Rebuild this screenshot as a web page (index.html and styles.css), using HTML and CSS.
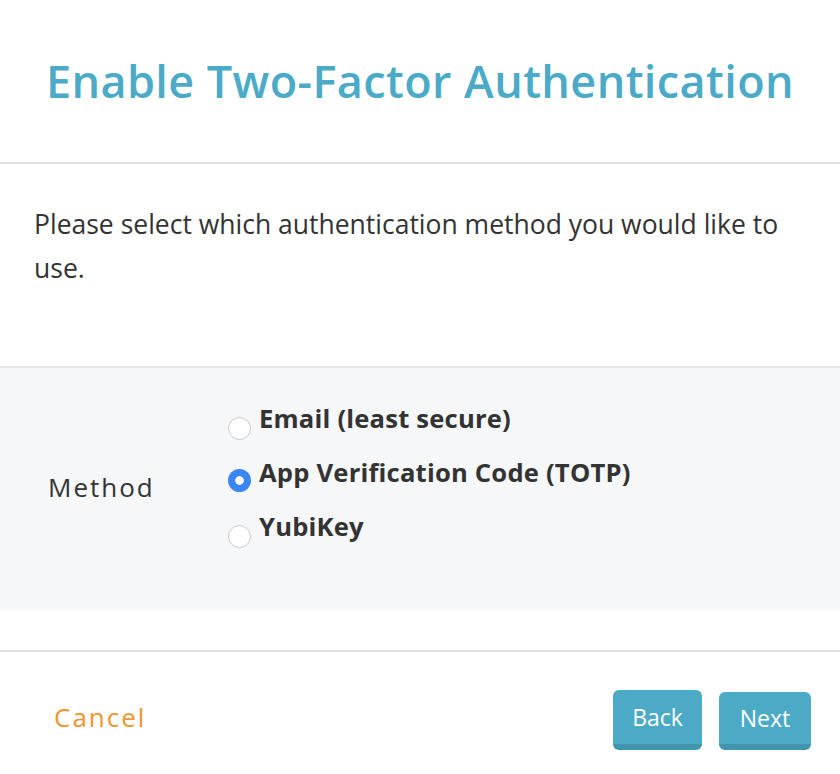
FILE: index.html
```html
<!DOCTYPE html>
<html>
<head>
<meta charset="utf-8">
<link rel="stylesheet" href="styles.css">
</head>
<body>
<div class="dialog">
  <header class="head">
    <h1 class="title">Enable Two-Factor Authentication</h1>
  </header>
  <section class="intro">
    <p>Please select which authentication method you would like to use.</p>
  </section>
  <section class="panel">
    <div class="field-label">Method</div>
    <div class="options">
      <label class="option"><span class="radio"></span><span class="opt-text">Email (least secure)</span></label>
      <label class="option"><span class="radio checked"></span><span class="opt-text">App Verification Code (TOTP)</span></label>
      <label class="option"><span class="radio"></span><span class="opt-text">YubiKey</span></label>
    </div>
  </section>
  <div class="spacer"></div>
  <footer class="foot">
    <a class="cancel">Cancel</a>
    <div class="actions">
      <button class="btn btn-back">Back</button>
      <button class="btn btn-next">Next</button>
    </div>
  </footer>
</div>
</body>
</html>
```

FILE: styles.css
```css
* { box-sizing: border-box; }
html, body { margin: 0; padding: 0; background: #fff; }
body {
  font-family: "Open Sans", "Noto Sans", sans-serif;
  color: #333;
  width: 840px;
  height: 774px;
  overflow: hidden;
}
.dialog { display: flex; flex-direction: column; }
.head {
  height: 164px;
  border-bottom: 2px solid #e2e2e2;
  display: flex;
  align-items: center;
  justify-content: center;
}
.title {
  margin: 0 0 2px 0;
  font-size: 45px;
  font-weight: 600;
  color: #4aaac7;
  letter-spacing: 0.4px;
  white-space: nowrap;
}
.intro {
  height: 204px;
  padding: 38px 34px 0 34px;
  border-bottom: 2px solid #e3e5e8;
}
.intro p {
  margin: 0;
  font-size: 26.5px;
  line-height: 44px;
  color: #333;
  width: 772px;
}
.panel {
  background: #f6f7f9;
  height: 242px;
  display: flex;
  padding: 23px 0 0 48px;
}
.field-label {
  width: 180px;
  font-size: 26px;
  letter-spacing: 2px;
  color: #333;
  padding-top: 78px;
}
.options { display: flex; flex-direction: column; }
.option {
  display: flex;
  align-items: center;
  height: 54px;
}
.radio {
  width: 23px;
  height: 23px;
  border-radius: 50%;
  border: 1px solid #c9c9c9;
  background: #fff;
  margin: 20px 8px 0 0;
  flex: none;
}
.radio.checked {
  border: none;
  background: radial-gradient(circle, #fff 0 4px, #3b86f7 4.6px);
  margin-top: 16px;
}
.opt-text {
  font-size: 25.6px;
  font-weight: 700;
  color: #333;
  letter-spacing: 0.2px;
}
.spacer { height: 42px; border-bottom: 2px solid #e2e2e2; }
.foot {
  height: 120px;
  display: flex;
  align-items: flex-start;
  justify-content: space-between;
  padding: 38px 29px 0 54px;
}
.cancel {
  font-size: 26px;
  color: #f0952f;
  letter-spacing: 2px;
  margin-top: 9px;
}
.actions { display: flex; gap: 17px; align-items: flex-start; }
.btn {
  font-family: "Open Sans", "Noto Sans", sans-serif;
  font-size: 23px;
  color: #fff;
  background: #4babc7;
  border: none;
  border-bottom: 6px solid #3f96ad;
  border-radius: 6px;
  padding: 0;
  height: 60px;
}
.btn-back { width: 89px; }
.btn-next { width: 92px; margin-top: 2px; height: 58px; }
```
